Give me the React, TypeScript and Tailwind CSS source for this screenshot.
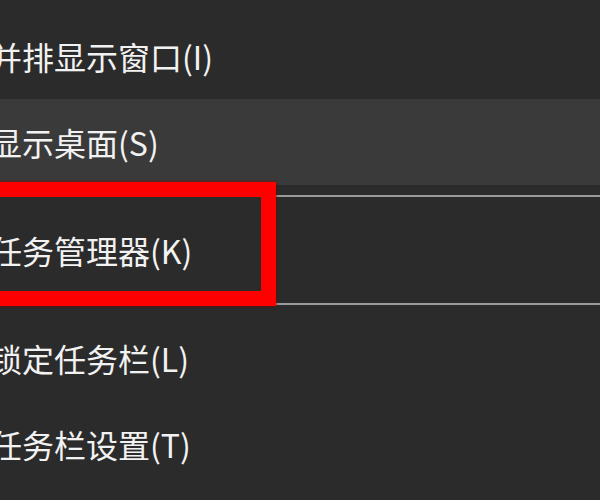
import React from "react";

interface MenuItem {
  label: string;
  key: string;
  active?: boolean;
}

const groupA: MenuItem[] = [
  { label: "并排显示窗口", key: "I" },
  { label: "显示桌面", key: "S", active: true },
];

const groupB: MenuItem[] = [{ label: "任务管理器", key: "K" }];

const groupC: MenuItem[] = [
  { label: "锁定任务栏", key: "L" },
  { label: "任务栏设置", key: "T" },
];

function Row({ item }: { item: MenuItem }) {
  return (
    <div
      className={`h-[86px] flex items-center ${
        item.active ? "bg-[#3a3a3a]" : ""
      }`}
    >
      <span className="ml-[-10px] whitespace-nowrap text-[32px] leading-none text-[#f2f2f2]">
        {item.label}({item.key})
      </span>
    </div>
  );
}

function Separator() {
  return (
    <div className="h-[22px] flex items-center">
      <div className="h-[2px] w-full bg-[#9a9a9a]" />
    </div>
  );
}

export default function App() {
  return (
    <div
      className="relative w-[600px] h-[500px] overflow-hidden bg-[#2b2b2b]"
      style={{ fontFamily: '"Noto Sans CJK SC", "Noto Sans", sans-serif' }}
    >
      <div className="pt-[13px] flex flex-col">
        {groupA.map((item) => (
          <Row key={item.key} item={item} />
        ))}
        <Separator />
        {groupB.map((item) => (
          <Row key={item.key} item={item} />
        ))}
        <Separator />
        {groupC.map((item) => (
          <Row key={item.key} item={item} />
        ))}
      </div>

      {/* red annotation box around 任务管理器 */}
      <div className="absolute left-[-20px] top-[182px] w-[296px] h-[124px] border-[15px] border-[#ff0000] shadow-[0_0_3px_#7a0000]" />
    </div>
  );
}
